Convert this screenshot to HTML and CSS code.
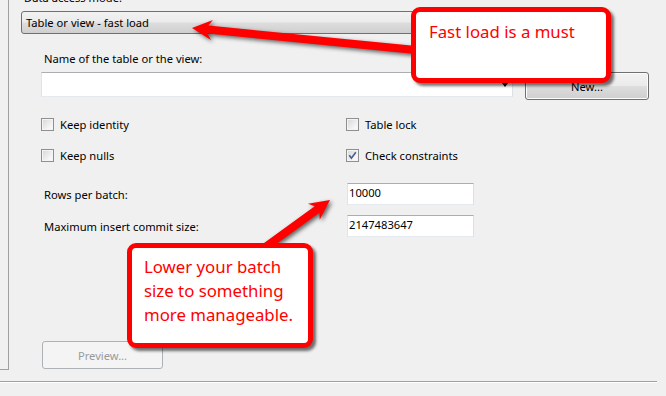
FILE: index.html
```html
<!DOCTYPE html>
<html lang="en">
<head>
  <meta charset="UTF-8">
  <title>OLE DB Destination - Connection Manager</title>
  <link rel="stylesheet" href="styles.css">
</head>
<body>
  <div class="window">
    <div class="top">
      <div class="nav"></div>
      <div class="main">
        <div class="caption">Data access mode:</div>
        <div class="combo">Table or view - fast load</div>

        <div class="section">
          <div class="label name-label">Name of the table or the view:</div>
          <div class="name-row">
            <div class="input wide"><span class="drop"></span></div>
            <button class="btn new">New...</button>
          </div>

          <div class="options">
            <label class="check"><span class="box"></span>Keep identity</label>
            <label class="check"><span class="box"></span>Table lock</label>
            <label class="check"><span class="box"></span>Keep nulls</label>
            <label class="check"><span class="box checked"><svg width="9" height="9" viewBox="0 0 9 9"><path d="M1.3 4.2 L3.4 7.2 L7.8 1.2" fill="none" stroke="#4a5a93" stroke-width="1.6"/></svg></span>Check constraints</label>
          </div>

          <div class="fields">
            <div class="label">Rows per batch:</div>
            <div class="input">10000</div>
            <div class="label">Maximum insert commit size:</div>
            <div class="input">2147483647</div>
          </div>

          <button class="btn preview" disabled>Preview...</button>
        </div>
      </div>
    </div>
    <div class="separator"></div>

    <!-- annotation arrows -->
    <svg class="arrows" width="666" height="396" viewBox="0 0 666 396">
      <g transform="translate(192 28) rotate(5.6)">
        <polygon points="0,0 20,-10 16,-4 235,-4 235,4 16,4 20,10"/>
      </g>
      <g transform="translate(330 200) rotate(144)">
        <polygon points="0,0 20,-10 16,-4 85,-4 85,4 16,4 20,10"/>
      </g>
    </svg>

    <div class="callout callout-top">Fast load is a must</div>
    <div class="callout callout-bottom">Lower your batch<br>size to something<br>more manageable.</div>
  </div>
</body>
</html>
```

FILE: styles.css
```css
body {
  margin: 0;
  background-color: #f0f0f0;
  font-family: 'Noto Sans', 'Open Sans', sans-serif;
  font-size: 11.2px;
  line-height: 15px;
  color: #000;
}
.window {
  position: relative;
  width: 666px;
  height: 396px;
  overflow: hidden;
}
.top {
  display: flex;
  height: 370px;
}
.nav {
  flex-shrink: 0;
  width: 8px;
  height: 369px;
  border-right: 1px solid #a0a0a0;
  border-bottom: 1px solid #a0a0a0;
}
.main {
  flex: 1;
  padding-left: 12px;
}
.caption {
  margin-top: -10px;
  padding-left: 3px;
}
.combo {
  box-sizing: border-box;
  margin-top: 6px;
  width: 579px;
  height: 23px;
  padding-left: 4px;
  border: 1px solid #707070;
  border-radius: 3px;
  background: linear-gradient(#f2f2f2 0%, #ebebeb 48%, #dddddd 52%, #cfcfcf 100%);
  line-height: 21px;
}
.section {
  margin-left: 20px;
}
.label {
  padding-left: 3px;
}
.name-label {
  margin-top: 17px;
}
.name-row {
  display: flex;
  gap: 12px;
  margin-top: 6px;
  align-items: flex-start;
}
.input {
  position: relative;
  box-sizing: border-box;
  width: 127px;
  height: 22px;
  padding-left: 1px;
  border: 1px solid;
  border-color: #abadb3 #dbdfe6 #e3e9ef #e2e3ea;
  background-color: #fff;
  line-height: 18px;
}
.input.wide {
  width: 472px;
  height: 25px;
}
.drop {
  position: absolute;
  right: 4px;
  top: 10px;
  border-left: 3px solid transparent;
  border-right: 3px solid transparent;
  border-top: 4px solid #000;
}
.btn {
  box-sizing: border-box;
  height: 28px;
  padding: 0;
  border: 1px solid #707070;
  border-radius: 3px;
  background: linear-gradient(#f2f2f2 0%, #ebebeb 48%, #dddddd 52%, #cfcfcf 100%);
  box-shadow: inset 0 0 0 1px #fcfcfc;
  font-family: inherit;
  font-size: 11.2px;
  color: #000;
}
.new {
  width: 124px;
}
.preview {
  width: 121px;
  margin-top: 104px;
  margin-left: 1px;
  border-color: #adb2b5;
  background: #f4f4f4;
  box-shadow: none;
  color: #9a9a9a;
}
.options {
  display: grid;
  grid-template-columns: 305px auto;
  row-gap: 16px;
  margin-top: 17px;
}
.check {
  display: flex;
  align-items: center;
  gap: 6px;
}
.box {
  box-sizing: border-box;
  display: flex;
  align-items: center;
  justify-content: center;
  width: 13px;
  height: 13px;
  border: 1px solid #8e8f8f;
  background: linear-gradient(135deg, #d6d6d6, #f4f4f4 70%, #fcfcfc);
  box-shadow: inset 0 0 0 1px #f4f4f4;
}
.fields {
  display: grid;
  grid-template-columns: 306px 127px;
  row-gap: 10px;
  align-items: center;
  margin-top: 20px;
}
.separator {
  width: 657px;
  margin-top: 11px;
  border-top: 1px solid #a0a0a0;
  border-bottom: 1px solid #fff;
}
.arrows {
  position: absolute;
  left: 0;
  top: 0;
  fill: #ff0000;
  filter: drop-shadow(2px 2px 2px rgba(0, 0, 0, 0.6));
  pointer-events: none;
}
.callout {
  position: absolute;
  box-sizing: border-box;
  border: 5px solid #ff0000;
  border-radius: 9px;
  background-color: #fff;
  box-shadow: 3px 3px 3px rgba(0, 0, 0, 0.55);
  color: #ff0000;
  font-size: 16.8px;
  line-height: 24px;
  white-space: nowrap;
}
.callout-top {
  left: 411px;
  top: 7px;
  width: 200px;
  height: 76px;
  padding: 8px 13px;
}
.callout-bottom {
  left: 127px;
  top: 243px;
  width: 186px;
  height: 105px;
  padding: 7px 12px;
}
```
